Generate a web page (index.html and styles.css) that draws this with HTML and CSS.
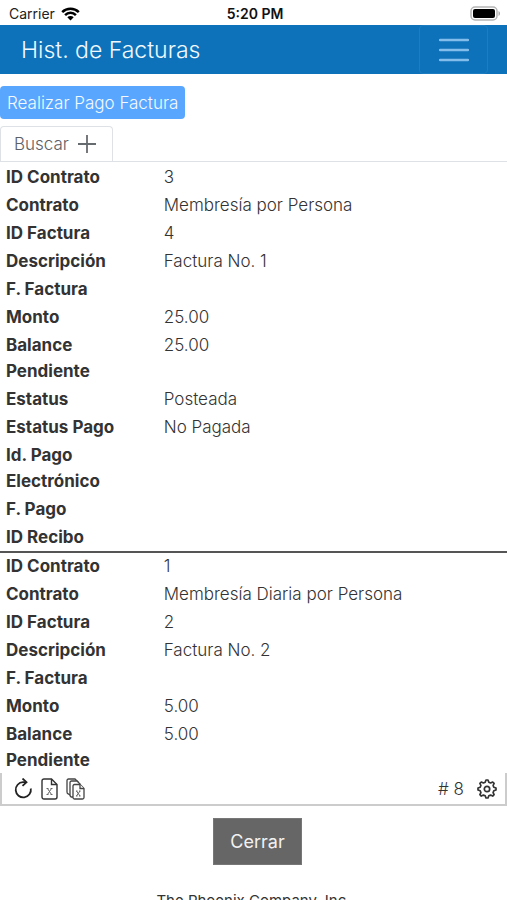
FILE: index.html
```html
<!DOCTYPE html>
<html lang="es">
<head>
<meta charset="utf-8">
<meta name="viewport" content="width=device-width, initial-scale=1">
<title>Hist. de Facturas</title>
<link rel="stylesheet" href="styles.css">
</head>
<body>
<div class="status">
  <div class="carrier">
    <span>Carrier</span>
    <svg width="19" height="14" viewBox="0 0 19 14" aria-hidden="true">
      <path d="M1.2 5.1a11.8 11.8 0 0 1 16.6 0M4.1 8.1a7.6 7.6 0 0 1 10.8 0" fill="none" stroke="#000" stroke-width="2.5"/>
      <path d="M9.5 13.6 6.3 10.3a4.5 4.5 0 0 1 6.4 0z"/>
    </svg>
  </div>
  <span class="clock">5:20 PM</span>
  <svg class="battery" width="31" height="15" viewBox="0 0 31 15" aria-hidden="true">
    <rect x="1" y="1" width="26" height="13" rx="4" fill="#fff" stroke="#b5b5b5" stroke-width="1.5"/>
    <rect x="3" y="3" width="22" height="9" rx="2"/>
    <path d="M28.5 5c2 .8 2 4.200 0 5z" fill="#aaa"/>
  </svg>
</div>

<header class="navbar">
  <h1>Hist. de Facturas</h1>
  <button class="menu" type="button" aria-label="Menú">
    <svg width="30" height="24" viewBox="0 0 30 24" aria-hidden="true">
      <path d="M1 2h28M1 12h28M1 22h28" stroke="#83bdeb" stroke-width="2.400" stroke-linecap="round"/>
    </svg>
  </button>
</header>

<main>
  <button class="pay" type="button">Realizar Pago Factura</button>
  <div class="tabs">
    <button class="tab" type="button">Buscar
      <svg width="18" height="18" viewBox="0 0 18 18" aria-hidden="true"><path d="M9 0v18M0 9h18" stroke="#666b70" stroke-width="1.800"/></svg>
    </button>
  </div>

  <dl class="record">
    <dt>ID Contrato</dt><dd>3</dd>
    <dt>Contrato</dt><dd>Membresía por Persona</dd>
    <dt>ID Factura</dt><dd>4</dd>
    <dt>Descripción</dt><dd>Factura No. 1</dd>
    <dt>F. Factura</dt><dd></dd>
    <dt>Monto</dt><dd>25.00</dd>
    <dt>Balance Pendiente</dt><dd>25.00</dd>
    <dt>Estatus</dt><dd>Posteada</dd>
    <dt>Estatus Pago</dt><dd>No Pagada</dd>
    <dt>Id. Pago Electrónico</dt><dd></dd>
    <dt>F. Pago</dt><dd></dd>
    <dt>ID Recibo</dt><dd></dd>
  </dl>
  <dl class="record">
    <dt>ID Contrato</dt><dd>1</dd>
    <dt>Contrato</dt><dd>Membresía Diaria por Persona</dd>
    <dt>ID Factura</dt><dd>2</dd>
    <dt>Descripción</dt><dd>Factura No. 2</dd>
    <dt>F. Factura</dt><dd></dd>
    <dt>Monto</dt><dd>5.00</dd>
    <dt>Balance Pendiente</dt><dd>5.00</dd>
  </dl>

  <div class="toolbar">
    <button class="icon" type="button" aria-label="Actualizar">
      <svg width="20" height="22" viewBox="0 0 20 22" fill="none" stroke="#222" stroke-width="1.800" aria-hidden="true">
        <path d="M13 4.200H10A7.600 7.600 0 1 0 17.800 10.500"/><path d="M9.500 .5l4 3.700-4 3.700"/>
      </svg>
    </button>
    <button class="icon" type="button" aria-label="Exportar página a Excel">
      <svg width="17" height="22" viewBox="0 0 17 22" fill="none" stroke="#333" stroke-width="1.400" aria-hidden="true">
        <path d="M3 1h7.500L16 6.500V19a2 2 0 0 1-2 2H3a2 2 0 0 1-2-2V3a2 2 0 0 1 2-2z"/><path d="M10.500 1v5.500H16"/>
        <path d="M6.500 10.500l4 6M10.500 10.500l-4 6M5.500 10.500h2M9.500 10.500h2M5.500 16.500h2M9.500 16.500h2" stroke="#666" stroke-width="1"/>
      </svg>
    </button>
    <button class="icon" type="button" aria-label="Exportar todo a Excel">
      <svg width="19" height="22" viewBox="0 0 19 22" fill="#fff" stroke="#444" stroke-width="1.300" aria-hidden="true">
        <path d="M2.500 1H9l3 3v13.500H5L2.500 16A2 2 0 0 1 1 14V2.500A1.500 1.500 0 0 1 2.500 1z"/>
        <path d="M5.500 3H11l3 3v13H6.500A2 2 0 0 1 4 17V4.500A1.500 1.500 0 0 1 5.500 3z"/>
        <path d="M8.500 6.500H14l4 4V19.500a1.500 1.500 0 0 1-1.500 1.500h-8A1.500 1.500 0 0 1 7 19.500V8a1.500 1.500 0 0 1 1.500-1.500z"/><path d="M14 6.500v4h4"/>
        <path d="M10.500 13l3.500 5M14 13l-3.500 5M10 13h1.500M13 13h1.500M10 18h1.500M13 18h1.500" stroke="#666" stroke-width="1"/>
      </svg>
    </button>
    <span class="count"># 8</span>
    <button class="icon" type="button" aria-label="Configuración">
      <svg width="20" height="20" viewBox="0 0 20 20" fill="none" stroke="#333" stroke-width="1.700" stroke-linejoin="round" aria-hidden="true">
        <path d="M8.200 3.200 9 1h2l.8 2.200 1.800.8 2.100-1 1.400 1.400-1 2.100.7 1.700L19 9v2l-2.200.8-.7 1.800 1 2.100-1.400 1.400-2.100-1-1.800.7L11 19H9l-.8-2.200-1.800-.7-2.100 1-1.400-1.400 1-2.100-.7-1.800L1 11V9l2.200-.8.7-1.700-1-2.100L4.300 3l2.100 1z"/>
        <circle cx="10" cy="10" r="2.700"/>
      </svg>
    </button>
  </div>

  <div class="actions">
    <button class="close" type="button">Cerrar</button>
  </div>
</main>
<footer>The Phoenix Company, Inc.</footer>
</body>
</html>
```
FILE: styles.css
```css
* { box-sizing: border-box; }

body {
  margin: 0;
  height: 100vh;
  overflow: hidden;
  background: #fff;
  color: #333;
  font-family: Inter, "Liberation Sans", sans-serif;
  font-size: 17px;
  line-height: 26px;
}

button {
  font: inherit;
  color: inherit;
  padding: 0;
  border: 0;
  background: none;
}

svg { display: block; flex: none; }

.status {
  display: grid;
  grid-template-columns: 1fr auto 1fr;
  align-items: center;
  height: 25px;
  padding: 2px 6px 0 9px;
  font-size: 14px;
  line-height: 23px;
  color: #222;
}

.carrier { display: flex; align-items: center; gap: 6px; }
.clock { font-weight: 600; color: #111; }
.battery { justify-self: end; }

.navbar {
  display: flex;
  justify-content: space-between;
  align-items: stretch;
  height: 49px;
  padding: 0 19px 0 21px;
  background: #0d72b9;
  color: #f0f9ff;
}

.navbar h1 {
  margin: 0;
  font-size: 23px;
  font-weight: 350;
  line-height: 50px;
}

.menu {
  display: grid;
  place-items: center;
  width: 69px;
  border: 1px solid #1e7cc0;
  border-radius: 4px;
}

main { display: flex; flex-direction: column; padding-top: 12px; }

.pay {
  align-self: flex-start;
  height: 33px;
  padding: 0 7px;
  border-radius: 4px;
  background: #59a6ff;
  color: #f4f9ff;
  font-weight: 350;
}

.tabs {
  display: flex;
  margin-top: 7px;
  border-bottom: 1px solid #dee2e6;
}

.tab {
  display: flex;
  align-items: center;
  gap: 9px;
  height: 35px;
  padding: 0 16px 0 13px;
  border: 1px solid #dee2e6;
  border-bottom: 0;
  border-radius: 4px 4px 0 0;
  color: #5b6066;
  font-weight: 350;
}

.record {
  display: grid;
  grid-template-columns: 25% 1fr;
  column-gap: 34px;
  row-gap: 2px;
  margin: 0;
  padding: 2px 6px 1px;
}

.record + .record { border-top: 2px solid #555; padding-top: 0; padding-bottom: 0; }
.record dt { font-weight: 700; }
.record dd { margin: 0; font-weight: 350; }

.toolbar {
  display: flex;
  align-items: center;
  gap: 8px;
  height: 33px;
  padding: 0 8px 0 11px;
  border: solid #ccc;
  border-width: 0 2px 2px;
}

.count { margin: 0 5px 0 auto; font-weight: 350; }

.actions {
  display: flex;
  justify-content: center;
  padding: 12px 0 0 8px;
}

.close {
  height: 47px;
  padding: 0 16px;
  border: 1px solid #777;
  background: #666;
  color: #f2f2f2;
  font-size: 18px;
}

footer { margin-top: 24px; text-align: center; font-size: 15px; line-height: 24px; }
```
